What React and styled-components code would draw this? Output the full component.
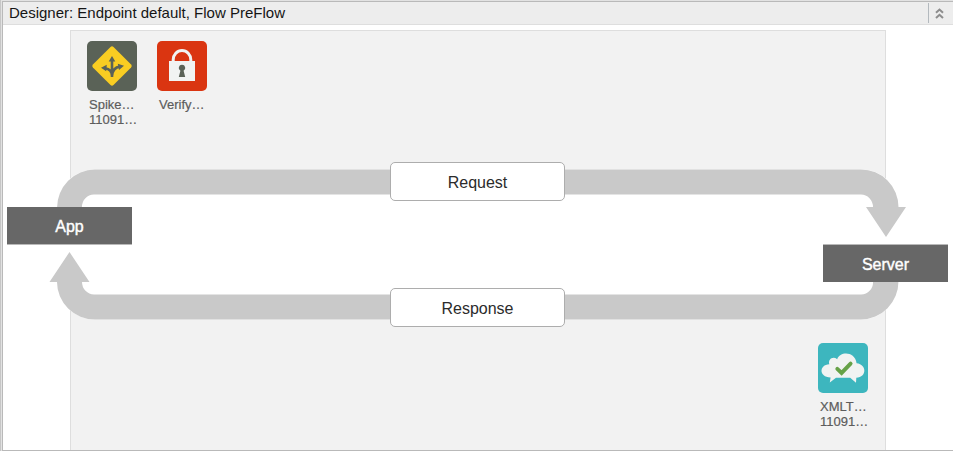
import React from "react";
import styled, { createGlobalStyle } from "styled-components";

const GlobalStyle = createGlobalStyle`
  * { box-sizing: border-box; }
  body { margin: 0; background: #e4e4e4; overflow: hidden; font-family: "Liberation Sans", Arial, sans-serif; }
`;

const Frame = styled.div`
  height: 451px;
  display: flex;
  flex-direction: column;
  padding: 1px 0 0 1px;
  background: #e2e2e2;
  border-left: 1px solid #c6c6c6;
`;

const Panel = styled.section`
  flex: 1;
  display: flex;
  flex-direction: column;
  background: #fff;
  border: 1px solid #b9b9b9;
  border-right: 0;
`;

const Header = styled.header`
  height: 23px;
  flex: none;
  display: flex;
  justify-content: space-between;
  background: #ededed;
  border-bottom: 1px solid #dedede;
`;

const Title = styled.h1`
  margin: 0;
  padding-left: 6px;
  font-size: 15px;
  font-weight: 400;
  line-height: 22px;
  color: #151515;
  white-space: nowrap;
`;

const CollapseButton = styled.button`
  width: 25px;
  height: 20px;
  margin-top: 1px;
  padding: 1px 0 0 6px;
  border: 0;
  border-left: 1px solid #b3b9be;
  background: none;
  display: flex;
  align-items: center;
`;

const Canvas = styled.main`
  width: 816px;
  margin: 5px 0 0 67px;
  flex: 1;
  display: flex;
  flex-direction: column;
  background: #f2f2f2;
  border: 1px solid #dedede;
  border-bottom: 0;
`;

const PolicyRow = styled.div`
  display: flex;
  gap: 14px;
  height: ${(p) => p.$height};
  padding: ${(p) => p.$padding};
  justify-content: ${(p) => (p.$end ? "flex-end" : "flex-start")};
`;

const PolicyTile = styled.div`
  width: 56px;
  display: flex;
  flex-direction: column;
  align-items: center;
`;

const PolicyArt = styled.svg`
  display: block;
  flex: none;
`;

const PolicyLabel = styled.div`
  width: 48px;
  margin-top: ${(p) => p.$gap || "6px"};
  padding-left: 1px;
  font-size: 13px;
  line-height: 15px;
  color: #5c5c5c;
  white-space: nowrap;
  -webkit-text-stroke: 0.2px #5c5c5c;
`;

const FlowDiagram = styled.div`
  position: relative;
  flex: none;
  width: 941px;
  height: 152px;
  margin-left: -64px;
`;

const LoopArt = styled.svg`
  display: block;
`;

const DiagramNode = styled.div`
  position: absolute;
  left: ${(p) => p.$x}px;
  top: ${(p) => p.$y}px;
  display: flex;
  align-items: center;
  justify-content: center;
  font-size: 16px;
`;

const Terminal = styled(DiagramNode)`
  width: 125px;
  height: 37px;
  background: #676767;
  color: #fff;
  box-shadow: 0 ${(p) => p.$edge} 0 #b9b9b9;
  padding-top: 2px;
  -webkit-text-stroke: 0.4px #fff;
`;

const Stage = styled(DiagramNode)`
  width: 175px;
  height: 39px;
  background: #fff;
  border: 1px solid #adadad;
  border-radius: 5px;
  color: #2b2b2b;
  padding-top: 3px;
`;

const SpikeIcon = () => (
  <PolicyArt width="50" height="50" viewBox="0 0 50 50">
    <rect width="50" height="50" rx="5" fill="#5a6257" />
    <path d="M23.5 5.9Q25 4.5 26.5 5.9L44.1 23.5Q45.5 25 44.1 26.5L26.5 44.1Q25 45.5 23.5 44.1L5.9 26.5Q4.5 25 5.9 23.5Z" fill="#f9cd22" />
    <path d="M25 36V19M25 35Q25 28 18 27.2M25 35Q25.5 26.5 33 25.6" fill="none" stroke="#5a6257" strokeWidth="2.6" />
    <path d="M25 15L28.3 20.6H21.7ZM14 26.7L19.8 23.8L19.2 30.3ZM37 24.8L30.8 22.7L32 29.1Z" fill="#5a6257" />
  </PolicyArt>
);

const LockIcon = () => (
  <PolicyArt width="50" height="50" viewBox="0 0 50 50">
    <rect width="50" height="50" rx="5" fill="#da3511" />
    <path d="M16.2 21V18.8A8.8 9.3 0 0 1 33.8 18.8V21" fill="none" stroke="#f1f3f2" strokeWidth="3" />
    <rect x="12" y="20" width="26" height="20" fill="#f1f3f2" />
    <path d="M25 23.8A3.2 3.2 0 0 1 26.6 29.8L28.2 36H21.8L23.4 29.8A3.2 3.2 0 0 1 25 23.8Z" fill="#5a6257" />
  </PolicyArt>
);

const CloudIcon = () => (
  <PolicyArt width="50" height="50" viewBox="0 0 50 50">
    <rect width="50" height="50" rx="5" fill="#3db6be" />
    <path d="M11.3 21.2C9.8 16.5 14.8 12.7 19.2 16.2C22 8.2 36.8 8 38.6 20.2C49 21.5 49 34.2 38.3 34.7L38 39.7L32.2 34.7H18L11.8 39.5L12.6 34.5C.5 34 1 21.7 11.3 21.2Z" fill="#f1f3f2" />
    <path d="M19.3 25.8L23.6 29.9L32.6 20.6" fill="none" stroke="#66a247" strokeWidth="3.9" strokeLinecap="round" />
  </PolicyArt>
);

const FlowLoop = () => (
  <LoopArt width="941" height="152" viewBox="7 169 941 152">
    <path d="M95 169.5H862A36.5 37 0 0 1 898.5 207V282A37 37.5 0 0 1 862 319.5H95A38 37.5 0 0 1 57 282V207A38 37.5 0 0 1 95 169.5Z" fill="#fff" />
    <path d="M57 208A38 38.5 0 0 1 95 169.5H861A37.5 37.5 0 0 1 898.5 207H906L886 237L866 207H873A12 12.5 0 0 0 861 194.5H94A12 12.5 0 0 0 82 208Z" fill="#c9c9c9" />
    <path d="M898.5 281A37.5 38.5 0 0 1 861 319.5H95A38 37.5 0 0 1 57 282H49.5L69.5 252L89.5 282H82A12 12.5 0 0 0 94 294.5H861A12 12.5 0 0 0 873 281Z" fill="#c9c9c9" />
  </LoopArt>
);

export default function App() {
  return (
    <>
      <GlobalStyle />
      <Frame>
        <Panel>
          <Header>
            <Title>Designer: Endpoint default, Flow PreFlow</Title>
            <CollapseButton aria-label="Collapse">
              <svg width="9" height="11" viewBox="0 0 9 11" fill="none" stroke="#8d8d8d" strokeWidth="2">
                <path d="M1 4.7L4.5 1.5L8 4.7M1 10L4.5 6.8L8 10" />
              </svg>
            </CollapseButton>
          </Header>
          <Canvas>
            <PolicyRow $height="138px" $padding="10px 13px">
              <PolicyTile>
                <SpikeIcon />
                <PolicyLabel>Spike…<br />11091…</PolicyLabel>
              </PolicyTile>
              <PolicyTile>
                <LockIcon />
                <PolicyLabel>Verify…</PolicyLabel>
              </PolicyTile>
            </PolicyRow>
            <FlowDiagram>
              <FlowLoop />
              <Terminal $x={0} $y={38} $edge="1px">App</Terminal>
              <Terminal $x={816} $y={76} $edge="-1px">Server</Terminal>
              <Stage $x={383} $y={-7}>Request</Stage>
              <Stage $x={383} $y={119}>Response</Stage>
            </FlowDiagram>
            <PolicyRow $height="129px" $padding="22px 14px" $end>
              <PolicyTile>
                <CloudIcon />
                <PolicyLabel>XMLT…<br />11091…</PolicyLabel>
              </PolicyTile>
            </PolicyRow>
          </Canvas>
        </Panel>
      </Frame>
    </>
  );
}
